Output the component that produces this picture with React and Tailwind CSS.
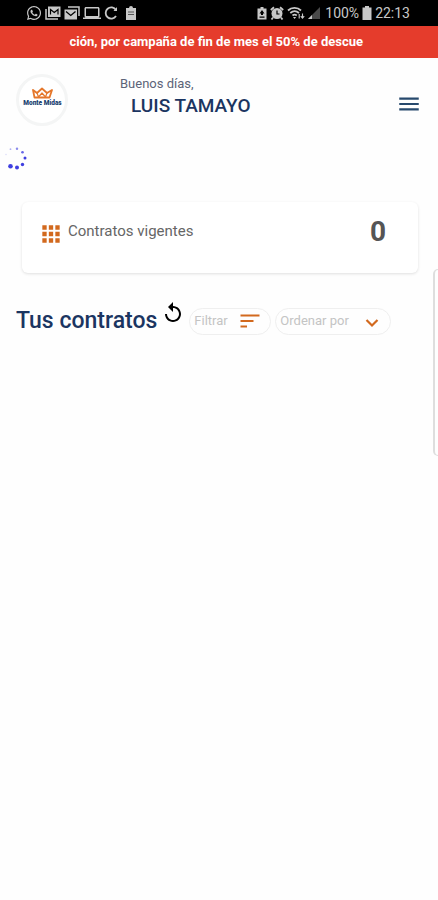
import React, { useState } from 'react';
import { FaWhatsapp } from 'react-icons/fa';
import {
  MdApps,
  MdLaptop,
  MdMenu,
  MdReplay,
} from 'react-icons/md';

const GalleryMailIcon = () => (
  <svg viewBox="0 0 16 14" fill="none" className="w-4 h-3.5">
    <path d="M1 3v10h12" stroke="currentColor" strokeWidth="1.5" />
    <path d="M3 0.5h12.5v10.5H3z" fill="currentColor" />
    <path d="M5.5 8.5V3.5L9.25 6.5L13 3.5V8.5" stroke="#000" strokeWidth="1.2" />
  </svg>
);

const MailStackIcon = () => (
  <svg viewBox="0 0 16 14" fill="none" className="w-4 h-3.5">
    <path d="M4 1h11v9" stroke="currentColor" strokeWidth="1.5" />
    <path d="M0.5 3.5h12.5v10H0.5z" fill="currentColor" />
    <path d="M2 5.5L6.75 9.5L11.5 5.5" stroke="#000" strokeWidth="1.3" />
  </svg>
);

const SyncArcIcon = () => (
  <svg viewBox="0 0 14 14" fill="none" stroke="currentColor" className="w-3.5 h-3.5">
    <path d="M12 4A5.6 5.6 0 1 0 12 10" strokeWidth="1.8" />
    <path d="M13 1v4H9.5z" fill="currentColor" stroke="none" />
  </svg>
);

const ClipboardIcon = () => (
  <svg viewBox="0 0 12 14" fill="currentColor" className="w-3 h-3.5">
    <path d="M1 2h3a2 2 0 0 1 4 0h3v12H1z" />
    <path d="M3 6h6M3 8.5h6" stroke="#555" strokeWidth="1" />
  </svg>
);

const BatterySaverIcon = () => (
  <svg viewBox="0 0 10 14" fill="none" className="w-2.5 h-3.5">
    <path d="M1 2.5h2.5V1h3v1.5H9.5V13.5H0.5V2.5z" fill="currentColor" />
    <path d="M5 4l2.5 3.5H6V9H4V7.5H2.5zM2.5 10.5h5v1.2h-5z" fill="#000" />
  </svg>
);

const BatteryIcon = () => (
  <svg viewBox="0 0 10 14" fill="currentColor" className="w-2.5 h-3.5">
    <path d="M3 0h4v1.500h2.500V14H0.500V1.500H3z" />
  </svg>
);

const AlarmIcon = () => (
  <svg viewBox="0 0 14 14" fill="none" stroke="currentColor" className="w-3.5 h-3.5">
    <circle cx="7" cy="7.5" r="5.5" fill="currentColor" stroke="none" />
    <path d="M0.8 4L4 1.2M13.2 4L10 1.2M3 11.5l-1.5 2M11 11.5l1.5 2" strokeWidth="1.8" />
    <path d="M7 4.5v3.5h2.5" stroke="#000" strokeWidth="1.2" />
  </svg>
);

const WifiIcon = () => (
  <svg viewBox="0 0 18 14" fill="none" stroke="currentColor" className="w-[18px] h-3.5">
    <path d="M1 4.5C4.5 1 10.5 1 14 4.5M3.3 7C6 4.6 9.3 4.6 12 7M5.5 9.4C7 8.3 8.3 8.3 9.8 9.4" strokeWidth="1.8" />
    <path d="M6 11h3.2l-1.6 2z" fill="currentColor" stroke="none" />
    <path d="M12.2 8v4.5M15.5 7.5v4.5M13.8 10.2l1.7 2 1.7-2" strokeWidth="1.1" />
  </svg>
);

const SignalIcon = () => (
  <svg viewBox="0 0 12 12" className="w-3 h-3">
    <path d="M12 0v12H0z" fill="#4a4a4a" />
    <path d="M4 8v4H0z" fill="#c8c8c8" />
  </svg>
);

const FilterIcon = () => (
  <svg viewBox="0 0 20 14" fill="none" stroke="#d2691e" strokeWidth="2" className="w-5 h-3.5">
    <path d="M0.5 1.5h19M0.5 7h13M0.5 12.5h6.5" />
  </svg>
);

const ChevronIcon = () => (
  <svg viewBox="0 0 14 14" fill="none" stroke="#d2691e" strokeWidth="2.2" className="w-3.5 h-3.5">
    <path d="M1.5 4L7 9.500l5.500-5.500" />
  </svg>
);

const Logo = () => (
  <svg viewBox="0 0 52 52" className="w-[52px] h-[52px]" role="img" aria-label="Monte Midas">
    <circle cx="26" cy="26" r="24.5" fill="#fff" stroke="#f4f5f5" strokeWidth="3" />
    <g fill="none" stroke="#e5772b" strokeWidth="1.8" strokeLinejoin="round">
      <path d="M18.5 23.5L17 16l4 3 5-4.5 5 4.5 5-3-2.500 7.5z" />
      <path d="M21 19l1.5 4L26 19l3.5 4L31 19" strokeWidth="1.2" />
    </g>
    <text x="26.5" y="31" textAnchor="middle" fontSize="6.5" fontWeight="900" fill="#17406f" fontFamily="Roboto, sans-serif">
      Monte Midas
    </text>
  </svg>
);

const Spinner = () => (
  <svg viewBox="0 0 24 24" fill="#3f3fe0" className="w-6 h-6" role="img" aria-label="Cargando">
    <circle cx="6.5" cy="20.3" r="2.3" />
    <circle cx="13" cy="21.5" r="2" />
    <circle cx="18.5" cy="18.5" r="1.7" />
    <circle cx="21" cy="12" r="1.5" />
    <circle cx="18.5" cy="6.2" r="1.3" opacity="0.8" />
    <circle cx="13" cy="2.8" r="1.2" opacity="0.6" />
    <circle cx="6.5" cy="3.2" r="0.9" opacity="0.4" />
    <circle cx="2" cy="8.5" r="0.7" opacity="0.2" />
  </svg>
);

export default function App() {
  const [order, setOrder] = useState('');

  return (
    <div className="relative min-h-screen overflow-hidden bg-[#fefefe] font-[Roboto,sans-serif]">
      <div className="flex h-[26px] items-center justify-between bg-black pl-[26px] pr-7 text-[#c8c8c8]">
        <div className="flex items-center gap-[3px]">
          <FaWhatsapp className="w-4 h-4" />
          <GalleryMailIcon />
          <MailStackIcon />
          <MdLaptop className="w-[18px] h-[18px]" />
          <SyncArcIcon />
          <span className="pl-1"><ClipboardIcon /></span>
        </div>
        <div className="flex items-center gap-[3px]">
          <BatterySaverIcon />
          <AlarmIcon />
          <WifiIcon />
          <SignalIcon />
          <span className="pl-0.5 text-sm">100%</span>
          <BatteryIcon />
          <span className="text-sm">22:13</span>
        </div>
      </div>

      <div className="flex h-8 justify-end bg-[#e53c2c] px-[75px]">
        <p className="whitespace-nowrap text-[13px] leading-8 font-bold text-white">
          ción, por campaña de fin de mes el 50% de descue
        </p>
      </div>

      <header className="flex items-center px-4 pt-4">
        <Logo />
        <div className="ml-[52px] flex-1 pb-2">
          <p className="text-[13px] leading-5 text-[#5c6478]">Buenos días,</p>
          <h1 className="pl-[11px] text-[19px] leading-6 font-medium text-[#1b3561]">LUIS TAMAYO</h1>
        </div>
        <button aria-label="Menú" className="pt-2 text-[#27496d]">
          <MdMenu className="w-[26px] h-[26px]" />
        </button>
      </header>

      <div className="px-1 pt-5">
        <Spinner />
      </div>

      <section className="ml-[22px] mr-5 mt-8 flex h-[71px] items-center rounded-md bg-white px-4 pb-3 shadow-[0_1px_3px_rgba(0,0,0,0.12)]">
        <MdApps className="mt-1 w-[26px] h-[26px] text-[#d2691e]" />
        <h2 className="ml-1 flex-1 text-[15px] text-[#666]">Contratos vigentes</h2>
        <span className="pr-4 text-[28px] leading-8 font-bold text-[#555]">0</span>
      </section>

      <section className="mt-7 flex items-center pl-4">
        <h2 className="text-[23px] leading-8 font-medium text-[#1b3561]">Tus contratos</h2>
        <button aria-label="Recargar" className="ml-1 pb-4 text-black">
          <MdReplay className="w-6 h-6" />
        </button>
        <button className="ml-1 flex h-[27px] w-[82px] items-center justify-between rounded-full border border-[#efefef] pl-1 pr-2.5 text-[13px] text-[#c4c4c4]">
          Filtrar
          <FilterIcon />
        </button>
        <div className="relative ml-1">
          <select
            aria-label="Ordenar por"
            value={order}
            onChange={(e) => setOrder(e.target.value)}
            className="h-[27px] w-[116px] appearance-none rounded-full border border-[#efefef] pl-1 text-[13px] text-[#c4c4c4]"
          >
            <option value="">Ordenar por</option>
          </select>
          <span className="pointer-events-none absolute top-2 right-3">
            <ChevronIcon />
          </span>
        </div>
      </section>

      {/* edge panel handle */}
      <div className="absolute top-[269px] right-0 h-[187px] w-[5px] rounded-l-md border-y border-l-2 border-[#dedede]" />
    </div>
  );
}
